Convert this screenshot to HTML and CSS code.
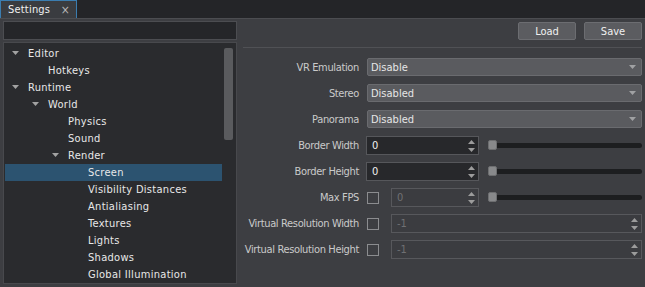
FILE: index.html
```html
<!DOCTYPE html>
<html lang="en">
<head>
<meta charset="UTF-8" />
<title>Settings</title>
<link rel="stylesheet" href="styles.css">
</head>
<body>

<div class="tabbar">
  <div class="tab"><span>Settings</span><span class="tab-close">&#215;</span></div>
</div>

<div class="main">
  <div class="side">
    <div class="search"></div>
    <div class="tree">
      <div class="tree-list">
        <div class="node lvl0"><span class="twisty"><svg width="7" height="4"><path d="M0 0h7L3.5 4z" /></svg></span>Editor</div>
        <div class="node lvl1"><span class="twisty"></span>Hotkeys</div>
        <div class="node lvl0"><span class="twisty"><svg width="7" height="4"><path d="M0 0h7L3.5 4z" /></svg></span>Runtime</div>
        <div class="node lvl1"><span class="twisty"><svg width="7" height="4"><path d="M0 0h7L3.5 4z" /></svg></span>World</div>
        <div class="node lvl2"><span class="twisty"></span>Physics</div>
        <div class="node lvl2"><span class="twisty"></span>Sound</div>
        <div class="node lvl2"><span class="twisty"><svg width="7" height="4"><path d="M0 0h7L3.5 4z" /></svg></span>Render</div>
        <div class="node lvl3 selected"><span class="twisty"></span>Screen</div>
        <div class="node lvl3"><span class="twisty"></span>Visibility Distances</div>
        <div class="node lvl3"><span class="twisty"></span>Antialiasing</div>
        <div class="node lvl3"><span class="twisty"></span>Textures</div>
        <div class="node lvl3"><span class="twisty"></span>Lights</div>
        <div class="node lvl3"><span class="twisty"></span>Shadows</div>
        <div class="node lvl3"><span class="twisty"></span>Global Illumination</div>
      </div>
      <div class="scrollbar"><div class="thumb"></div></div>
    </div>
  </div>

  <div class="content">
    <div class="toolbar">
      <button class="btn">Load</button>
      <button class="btn">Save</button>
    </div>
    <div class="sep"></div>

    <div class="form">
      <label class="lbl">VR Emulation</label>
      <div class="combo"><span>Disable</span><svg class="combo-arrow" width="7" height="4"><path d="M0 0h7L3.5 4z" /></svg></div>

      <label class="lbl">Stereo</label>
      <div class="combo"><span>Disabled</span><svg class="combo-arrow" width="7" height="4"><path d="M0 0h7L3.5 4z" /></svg></div>

      <label class="lbl">Panorama</label>
      <div class="combo"><span>Disabled</span><svg class="combo-arrow" width="7" height="4"><path d="M0 0h7L3.5 4z" /></svg></div>

      <label class="lbl">Border Width</label>
      <div class="ctrl">
        <div class="spin"><span>0</span><span class="spin-arrows"><svg width="7" height="4"><path d="M3.5 0L7 4H0z" /></svg><svg width="7" height="4"><path d="M0 0h7L3.5 4z" /></svg></span></div>
        <div class="slider"><div class="track"></div><div class="handle"></div></div>
      </div>

      <label class="lbl">Border Height</label>
      <div class="ctrl">
        <div class="spin"><span>0</span><span class="spin-arrows"><svg width="7" height="4"><path d="M3.5 0L7 4H0z" /></svg><svg width="7" height="4"><path d="M0 0h7L3.5 4z" /></svg></span></div>
        <div class="slider"><div class="track"></div><div class="handle"></div></div>
      </div>

      <label class="lbl">Max FPS</label>
      <div class="ctrl">
        <span class="check"></span>
        <div class="spin spin-short disabled"><span>0</span><span class="spin-arrows"><svg width="7" height="4"><path d="M3.5 0L7 4H0z" /></svg><svg width="7" height="4"><path d="M0 0h7L3.5 4z" /></svg></span></div>
        <div class="slider"><div class="track"></div><div class="handle"></div></div>
      </div>

      <label class="lbl">Virtual Resolution Width</label>
      <div class="ctrl">
        <span class="check"></span>
        <div class="spin spin-wide disabled"><span>-1</span><span class="spin-arrows"><svg width="7" height="4"><path d="M3.5 0L7 4H0z" /></svg><svg width="7" height="4"><path d="M0 0h7L3.5 4z" /></svg></span></div>
      </div>

      <label class="lbl">Virtual Resolution Height</label>
      <div class="ctrl">
        <span class="check"></span>
        <div class="spin spin-wide disabled"><span>-1</span><span class="spin-arrows"><svg width="7" height="4"><path d="M3.5 0L7 4H0z" /></svg><svg width="7" height="4"><path d="M0 0h7L3.5 4z" /></svg></span></div>
      </div>
    </div>
  </div>
</div>

</body>
</html>
```

FILE: styles.css
```css
body {
  margin: 0;
  width: 645px;
  height: 287px;
  overflow: hidden;
  background: #3d3e42;
  font-family: "DejaVu Sans", Tahoma, sans-serif;
  font-stretch: condensed;
  font-size: 11px;
  color: #e4e4e4;
}

.tabbar {
  height: 18px;
  background: #242528;
  display: flex;
}

.tab {
  width: 77px;
  box-sizing: border-box;
  border: 1px solid #3b7db0;
  border-bottom: none;
  background: #3a3c40;
  display: flex;
  align-items: center;
  justify-content: space-between;
  padding: 0 6px 0 7px;
  color: #f0f0f0;
  letter-spacing: 0.2px;
}

.tab-close {
  color: #b8b8b8;
  font-size: 12px;
}

.main {
  display: flex;
  height: 269px;
  box-sizing: border-box;
  border-top: 1px solid #4c4d51;
}

.side {
  width: 240px;
  box-sizing: border-box;
  padding: 2px 3px 3px;
  display: flex;
  flex-direction: column;
  gap: 2px;
}

.search {
  height: 19px;
  box-sizing: border-box;
  background: #252629;
  border: 1px solid #4c4d51;
}

.tree {
  flex: 1;
  display: flex;
  background: #2a2b2e;
  border: 1px solid #48494d;
}

.tree-list {
  flex: 1;
  padding: 2px 0 0 1px;
}

.node {
  height: 17px;
  display: flex;
  align-items: center;
  white-space: nowrap;
  letter-spacing: 0.3px;
  color: #e8e8e8;
}

.node.selected {
  background: #2c5370;
}

.lvl0 { padding-left: 7px; }
.lvl1 { padding-left: 27px; }
.lvl2 { padding-left: 47px; }
.lvl3 { padding-left: 67px; }

.twisty {
  width: 16px;
  flex: none;
  display: flex;
  margin-top: -1px;
}

.twisty svg {
  fill: #a2a2a2;
}

.scrollbar {
  width: 14px;
  padding: 5px 0 0 2px;
  box-sizing: border-box;
}

.thumb {
  width: 9px;
  height: 92px;
  background: #5a5b5e;
  border-radius: 2px;
}

.content {
  flex: 1;
  padding: 3px 3px 0 0;
}

.toolbar {
  display: flex;
  justify-content: flex-end;
  gap: 8px;
}

.btn {
  width: 58px;
  height: 18px;
  padding: 0;
  background: #5b5c60;
  border: 1px solid #6c6d71;
  border-radius: 2px;
  color: #f0f0f0;
  font: inherit;
}

.sep {
  height: 1px;
  margin: 7px 0 0 3px;
  background: #505155;
}

.form {
  margin-top: 10px;
  padding-left: 3px;
  display: grid;
  grid-template-columns: 116px 1fr;
  column-gap: 8px;
  row-gap: 7px;
}

.lbl {
  height: 19px;
  line-height: 19px;
  text-align: right;
  white-space: nowrap;
  direction: rtl;
  letter-spacing: -0.35px;
  color: #cacaca;
}

.combo {
  height: 18px;
  box-sizing: border-box;
  background: #5a5b5f;
  border: 1px solid #6a6b6f;
  border-radius: 2px;
  padding: 0 5px 0 3px;
  display: flex;
  align-items: center;
  justify-content: space-between;
  color: #e6e6e6;
}

.combo-arrow {
  fill: #a0a1a3;
}

.ctrl {
  display: flex;
  align-items: center;
  height: 19px;
}

.spin {
  width: 113px;
  height: 19px;
  margin-left: -1px;
  box-sizing: border-box;
  background: #27282b;
  border: 1px solid #56575b;
  padding: 0 3px 0 5px;
  display: flex;
  align-items: center;
  justify-content: space-between;
  color: #f0f0f0;
}

.spin-short {
  width: 88px;
  margin-left: 0;
}

.spin-wide {
  flex: 1;
  margin-left: 0;
}

.spin.disabled {
  background: #3b3c40;
  border-color: #57585c;
  color: #6f7073;
}

.spin-arrows {
  display: flex;
  flex-direction: column;
  gap: 4px;
}

.spin-arrows svg {
  fill: #9c9c9c;
}

.check {
  width: 12px;
  height: 12px;
  box-sizing: border-box;
  border: 1px solid #8b8c8f;
  margin-right: 12px;
  flex: none;
}

.slider {
  flex: 1;
  height: 19px;
  margin-left: 9px;
  position: relative;
  display: flex;
  align-items: center;
}

.track {
  flex: 1;
  height: 5px;
  background: #1d1e20;
  border-radius: 3px;
}

.handle {
  position: absolute;
  left: 0;
  top: 4px;
  width: 9px;
  height: 10px;
  box-sizing: border-box;
  background: #88898b;
  border: 1px solid #6d6e70;
  border-radius: 2px;
}
```
